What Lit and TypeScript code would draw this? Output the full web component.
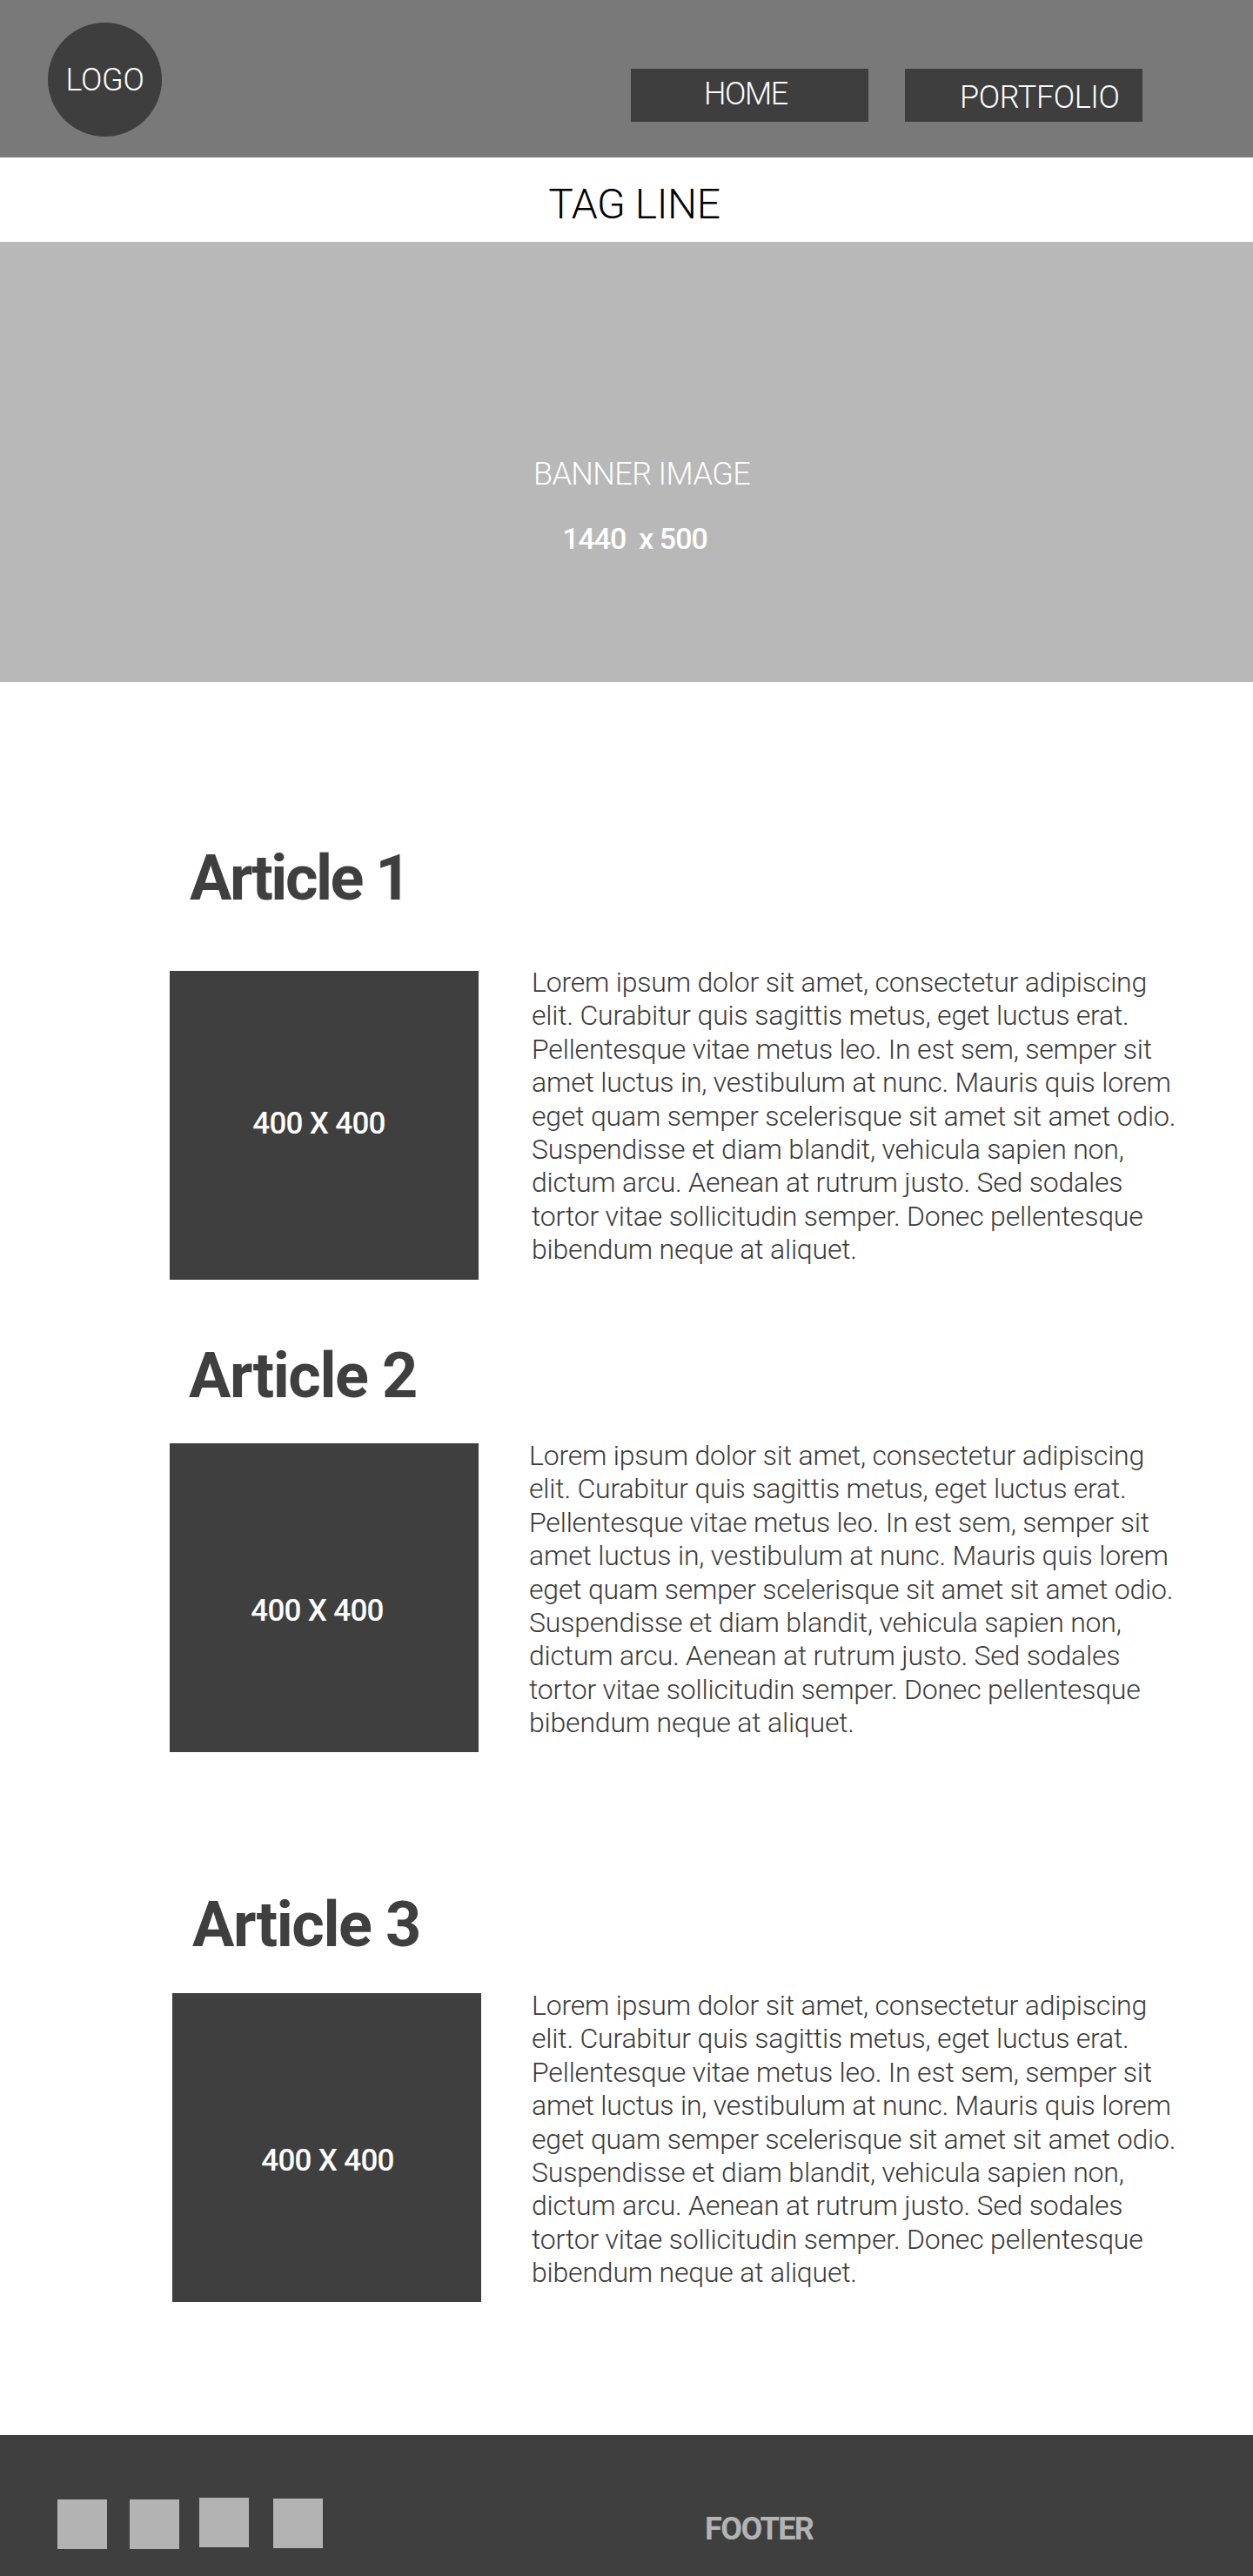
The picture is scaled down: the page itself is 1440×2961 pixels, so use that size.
import { LitElement, html, css } from "lit";
import { customElement } from "lit/decorators.js";

const LINES = [
  "Lorem ipsum dolor sit amet, consectetur adipiscing",
  "elit. Curabitur quis sagittis metus, eget luctus erat.",
  "Pellentesque vitae metus leo. In est sem, semper sit",
  "amet luctus in, vestibulum at nunc. Mauris quis lorem",
  "eget quam semper scelerisque sit amet sit amet odio.",
  "Suspendisse et diam blandit, vehicula sapien non,",
  "dictum arcu. Aenean at rutrum justo. Sed sodales",
  "tortor vitae sollicitudin semper. Donec pellentesque",
  "bibendum neque at aliquet.",
];

@customElement("app-root")
export class AppRoot extends LitElement {
  static styles = css`
    :host { display: block; width: 1440px; height: 2961px; overflow: hidden; background: #fff; font-family: "Roboto", "Liberation Sans", sans-serif; color: #3f3f3f; }
    .header { height: 181px; box-sizing: border-box; background: #797979; padding: 26px 127px 0 55px; display: flex; justify-content: space-between; }
    .logo { width: 131px; height: 131px; border-radius: 50%; background: #3e3e3e; color: #fff; font-size: 36px; font-weight: 300; display: flex; align-items: center; justify-content: center; letter-spacing: -0.3px; }
    .nav { display: flex; gap: 42px; padding-top: 53px; }
    .btn { width: 273px; height: 61px; background: #3e3e3e; color: #fff; font-size: 36px; font-weight: 300; line-height: 58px; box-sizing: border-box; }
    .home { padding-left: 84px; letter-spacing: -1.4px; }
    .portfolio { padding-left: 63px; padding-top: 4px; letter-spacing: -0.4px; }
    .tag { height: 97px; box-sizing: border-box; padding: 10px 0 0 18px; display: flex; align-items: center; justify-content: center; color: #000; font-size: 48px; font-weight: 300; letter-spacing: -0.4px; }
    .banner { height: 506px; background: #b8b8b8; color: #fff; box-sizing: border-box; padding-top: 247px; display: flex; flex-direction: column; align-items: center; }
    .banner .t { font-size: 36px; font-weight: 300; line-height: 40px; margin-left: 35px; letter-spacing: -0.6px; }
    .banner .s { font-size: 34px; font-weight: 500; line-height: 40px; margin: 34px 0 0 19px; white-space: pre; letter-spacing: -1px; }
    .article { display: block; }
    .a1 { padding: 182px 0 0 195px; }
    .a2 { padding: 67px 0 0 195px; }
    .a3 { padding: 155px 0 0 198px; }
    h2 { margin: 0; font-size: 72px; line-height: 84px; font-weight: 700; color: #3f3f3f; height: 150px; padding: 2px 0 0 23px; letter-spacing: -2.5px; box-sizing: border-box; }
    .a2 h2 { height: 121px; padding-left: 22px; letter-spacing: -1.4px; }
    .a3 h2 { height: 122px; padding-left: 23px; letter-spacing: -1.4px; }
    .row { display: flex; }
    .img { flex: none; width: 355px; height: 355px; background: #3f3f3f; color: #fff; font-size: 35px; font-weight: 500; letter-spacing: -0.7px; display: flex; align-items: center; justify-content: center; box-sizing: border-box; }
    .a1 .img { padding: 0 12px 4px 0; }
    .a2 .img { padding: 30px 16px 0 0; }
    .a3 .img { padding: 30px 0 0 2px; }
    .txt { margin: -6px 0 0 61px; font-size: 32px; font-weight: 300; letter-spacing: -0.2px; line-height: 38.4px; color: #3a3a3a; white-space: nowrap; }
    .a2 .txt { margin: -5px 0 0 58px; }
    .a3 .txt { margin: -5px 0 0 58px; }
    .footer { margin-top: 153px; height: 162px; background: #3f3f3f; display: flex; }
    .squares { display: flex; padding-left: 66px; }
    .sq { width: 57px; height: 57px; background: #b3b3b3; margin-top: 74px; }
    .sq:nth-child(2) { margin-left: 26px; }
    .sq:nth-child(3) { margin: 72px 0 0 23px; }
    .sq:nth-child(4) { margin: 73px 0 0 28px; }
    .f { margin: 87px 0 0 439px; font-size: 36px; line-height: 42px; height: 42px; font-weight: 700; letter-spacing: -1.6px; color: #b3b3b3; }
  `;

  article(cls: string, title: string) {
    return html`<section class="article ${cls}">
      <h2>${title}</h2>
      <div class="row">
        <div class="img">400 X 400</div>
        <div class="txt">${LINES.map((l) => html`<div>${l}</div>`)}</div>
      </div>
    </section>`;
  }

  render() {
    return html`
      <div class="header">
        <div class="logo">LOGO</div>
        <div class="nav">
          <div class="btn home">HOME</div>
          <div class="btn portfolio">PORTFOLIO</div>
        </div>
      </div>
      <div class="tag">TAG LINE</div>
      <div class="banner">
        <div class="t">BANNER IMAGE</div>
        <div class="s">1440  x 500</div>
      </div>
      ${this.article("a1", "Article 1")}
      ${this.article("a2", "Article 2")}
      ${this.article("a3", "Article 3")}
      <div class="footer">
        <div class="squares">
          <div class="sq"></div><div class="sq"></div><div class="sq"></div><div class="sq"></div>
        </div>
        <div class="f">FOOTER</div>
      </div>
    `;
  }
}
